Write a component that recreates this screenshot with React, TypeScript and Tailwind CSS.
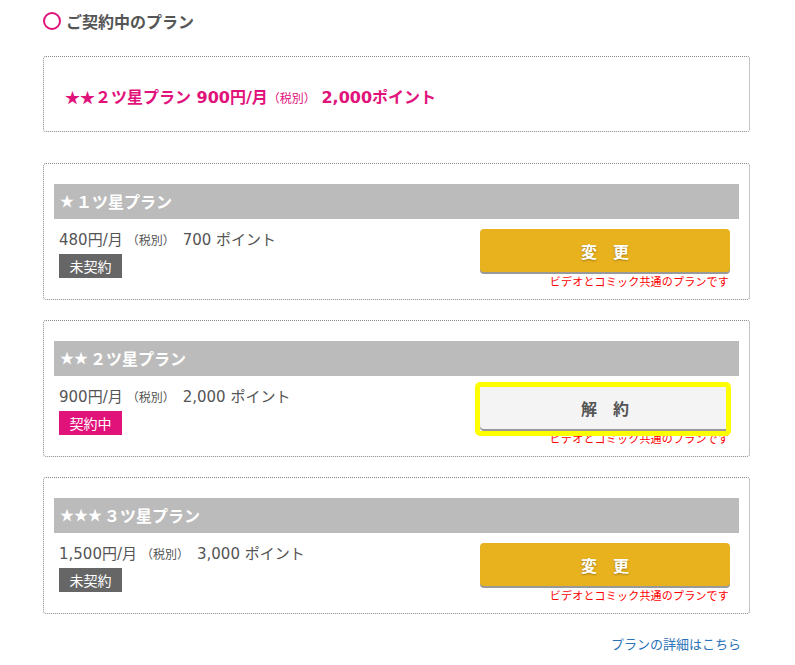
import React from "react";

const plans = [
    { stars: "★", name: "１ツ星プラン", price: "480円/月", points: "700 ポイント", current: false },
    { stars: "★★", name: "２ツ星プラン", price: "900円/月", points: "2,000 ポイント", current: true },
    { stars: "★★★", name: "３ツ星プラン", price: "1,500円/月", points: "3,000 ポイント", current: false },
];

const latin = { fontFamily: '"DejaVu Sans", "Noto Sans CJK JP", sans-serif' };

export default function App() {
    return (
        <div
            className="w-[795px] h-[665px] bg-white text-[#555] overflow-hidden"
            style={{ fontFamily: '"Noto Sans CJK JP", "Noto Sans", sans-serif' }}
        >
            <div className="pl-[43px] pr-[45px] pt-[11px]">
                <h2 className="flex items-center gap-[5px] h-[19px] text-[16px] font-bold leading-none text-[#555]">
                    <span className="w-[18px] h-[18px] rounded-full border-[2.5px] border-[#e2127b]" />
                    ご契約中のプラン
                </h2>

                <div className="mt-[26px] h-[76px] border border-dotted border-[#888] rounded-[3px] flex items-center pl-[21px] pt-[6px]">
                    <p className="text-[16px] font-bold text-[#e2127b] leading-none" style={latin}>
                        <span className="font-['Noto_Sans_CJK_JP'] text-[15px]">★★</span>２ツ星プラン 900円/月<span className="text-[12px] font-normal">（税別）</span> 2,000ポイント
                    </p>
                </div>

                <div className="mt-[31px] flex flex-col gap-[20px]">
                    {plans.map((p) => (
                        <div key={p.name} className="h-[137px] border border-dotted border-[#888] rounded-[3px] pt-[20px] px-[10px]">
                            <div className="h-[35px] bg-[#bbbbbb] flex items-center pl-[6px] pb-[2px] text-white text-[16px] font-bold">
                                <span className="text-[14px] mr-[2px]">{p.stars}</span>
                                {p.name}
                            </div>
                            <div className="flex justify-between">
                                <div className="pl-[5px] pt-[11px]">
                                    <p className="text-[15px] leading-[20px] text-[#555]" style={latin}>
                                        {p.price}
                                        <span className="text-[12px] ml-[4px]">（税別）</span>
                                        <span className="ml-[8px]">{p.points}</span>
                                    </p>
                                    <span
                                        className={`mt-[3px] inline-flex items-center justify-center w-[63px] h-[24px] text-white text-[14px] ${p.current ? "bg-[#e2127b]" : "bg-[#666666]"}`}
                                    >
                                        {p.current ? "契約中" : "未契約"}
                                    </span>
                                </div>
                                <div className="mr-[9px] pt-[10px] flex flex-col items-end">
                                    <div className="relative">
                                        <button
                                            className={`w-[250px] h-[43px] rounded-[4px] text-[16px] font-bold tracking-[1em] pl-[1em] shadow-[0_2px_0_#999] ${p.current ? "bg-[#f4f4f4] text-[#555]" : "bg-[#e8b11e] text-white [text-shadow:0_1px_2px_rgba(0,0,0,0.3)]"}`}
                                        >
                                            {p.current ? "解約" : "変更"}
                                        </button>
                                        {p.current && (
                                            <div className="absolute -left-[5px] -top-[4px] w-[256px] h-[54px] border-[5px] border-[#ffff00] rounded-[5px] pointer-events-none z-10" />
                                        )}
                                    </div>
                                    <p className="mt-[3px] text-[11px] leading-[12px] text-[#ff0000] mr-[1px] tracking-[0.2px]">
                                        ビデオとコミック共通のプランです
                                    </p>
                                </div>
                            </div>
                        </div>
                    ))}
                </div>

                <div className="mt-[20px] flex justify-end pr-[9px]">
                    <a className="text-[13px] text-[#2a73b8]">プランの詳細はこちら</a>
                </div>
            </div>
        </div>
    );
}
